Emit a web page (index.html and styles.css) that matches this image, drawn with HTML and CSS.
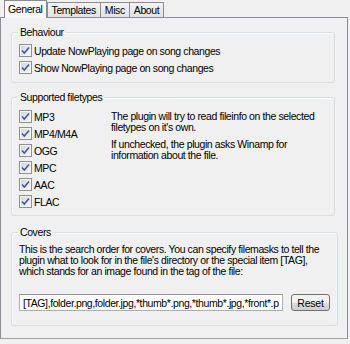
FILE: index.html
```html
<!DOCTYPE html>
<html lang="en">
<head>
<meta charset="UTF-8">
<title>NowPlaying settings</title>
<link rel="stylesheet" href="styles.css">
</head>
<body>

<div class="tabs">
    <span class="tab active">General</span>
    <span class="tab">Templates</span>
    <span class="tab">Misc</span>
    <span class="tab">About</span>
</div>

<div class="page">
    <fieldset class="group behaviour">
        <legend>Behaviour</legend>
        <label class="check"><span class="box"><svg width="11" height="11" viewBox="0 0 11 11"><path d="M2 5.5 L4.3 8 L9 2.5" /></svg></span>Update NowPlaying page on song changes</label>
        <label class="check"><span class="box"><svg width="11" height="11" viewBox="0 0 11 11"><path d="M2 5.5 L4.3 8 L9 2.5" /></svg></span>Show NowPlaying page on song changes</label>
    </fieldset>

    <fieldset class="group filetypes">
        <legend>Supported filetypes</legend>
        <div class="types">
            <div class="type-list">
                <label class="check"><span class="box"><svg width="11" height="11" viewBox="0 0 11 11"><path d="M2 5.5 L4.3 8 L9 2.5" /></svg></span>MP3</label>
                <label class="check"><span class="box"><svg width="11" height="11" viewBox="0 0 11 11"><path d="M2 5.5 L4.3 8 L9 2.5" /></svg></span>MP4/M4A</label>
                <label class="check"><span class="box"><svg width="11" height="11" viewBox="0 0 11 11"><path d="M2 5.5 L4.3 8 L9 2.5" /></svg></span>OGG</label>
                <label class="check"><span class="box"><svg width="11" height="11" viewBox="0 0 11 11"><path d="M2 5.5 L4.3 8 L9 2.5" /></svg></span>MPC</label>
                <label class="check"><span class="box"><svg width="11" height="11" viewBox="0 0 11 11"><path d="M2 5.5 L4.3 8 L9 2.5" /></svg></span>AAC</label>
                <label class="check"><span class="box"><svg width="11" height="11" viewBox="0 0 11 11"><path d="M2 5.5 L4.3 8 L9 2.5" /></svg></span>FLAC</label>
            </div>
            <div class="types-info">
                <p>The plugin will try to read fileinfo on the selected<br>filetypes on it's own.</p>
                <p>If unchecked, the plugin asks Winamp for<br>information about the file.</p>
            </div>
        </div>
    </fieldset>

    <fieldset class="group covers">
        <legend>Covers</legend>
        <p class="covers-text">This is the search order for covers. You can specify filemasks to tell the<br>plugin what to look for in the file's directory or the special item [TAG],<br>which stands for an image found in the tag of the file:</p>
        <div class="covers-row">
            <input type="text" class="masks" value="[TAG],folder.png,folder.jpg,*thumb*.png,*thumb*.jpg,*front*.png,*front*.jpg">
            <button type="button" class="btn">Reset</button>
        </div>
    </fieldset>
</div>

</body>
</html>
```

FILE: styles.css
```css
body {
    margin: 0;
    padding: 0;
    width: 350px;
    height: 344px;
    background-color: #f0f0f0;
    font-family: "Liberation Sans", Arial, sans-serif;
    font-size: 10.5px;
    letter-spacing: -0.4px;
    color: #000;
    overflow: hidden;
}
.tabs {
    display: flex;
    align-items: flex-end;
    height: 17px;
    padding-left: 4px;
    position: relative;
    z-index: 1;
}
.tab {
    height: 15px;
    line-height: 14px;
    padding: 0 4px;
    border: 1px solid #898c95;
    border-bottom: none;
    margin-left: -1px;
    background: linear-gradient(#f3f3f3, #e3e3e3);
    box-sizing: border-box;
}
.tab.active {
    height: 18px;
    margin-bottom: -1px;
    margin-left: 0;
    margin-right: 1px;
    padding: 0 3px;
    line-height: 16px;
    background: #f9f9f9;
}
.page {
    width: 348px;
    height: 322px;
    box-sizing: border-box;
    border: 1px solid #898c95;
    border-bottom-color: #a0a0a0;
    padding: 8px 12px 0 10px;
    background-color: #f0f0f0;
}
.group {
    margin: 0;
    border: 1px solid #d5dfe5;
    border-radius: 3px;
    box-shadow: inset 1px 1px 0 #fbfbfb;
    padding: 3px 7px 5px 7px;
}
.group legend {
    padding: 0 2px;
    margin-left: -1px;
    line-height: 13px;
    color: #000;
}
.check {
    display: flex;
    align-items: center;
    height: 17px;
    white-space: nowrap;
}
.box {
    display: flex;
    align-items: center;
    justify-content: center;
    width: 13px;
    height: 13px;
    box-sizing: border-box;
    border: 1px solid #8f8f8f;
    background: linear-gradient(135deg, #d2d4d8, #f7f7f7);
    box-shadow: inset 0 0 0 1px #f4f4f4;
    margin-right: 2px;
}
.box svg {
    display: block;
}
.box path {
    fill: none;
    stroke: #3d56a6;
    stroke-width: 1.5;
}
.behaviour {
    padding-bottom: 6px;
}
.filetypes {
    margin-top: 8px;
    padding-top: 4px;
    padding-bottom: 5px;
}
.types {
    display: flex;
}
.type-list {
    width: 92px;
}
.types-info {
    padding-top: 3px;
}
.types-info p {
    margin: 0 0 6px 0;
    line-height: 11px;
    white-space: nowrap;
}
.covers {
    margin-top: 10px;
    padding-top: 5px;
    padding-bottom: 14px;
}
.covers-text {
    margin: 0;
    line-height: 11px;
    white-space: nowrap;
}
.covers-row {
    display: flex;
    align-items: center;
    margin-top: 17px;
}
.masks {
    width: 264px;
    height: 17px;
    box-sizing: border-box;
    border: 1px solid #abadb3;
    border-top-color: #8f939b;
    padding: 0 3px;
    margin: 0;
    font-family: inherit;
    font-size: 10.5px;
    letter-spacing: -0.4px;
    background: #fff;
}
.btn {
    width: 39px;
    height: 17px;
    margin-left: 8px;
    padding: 0;
    box-sizing: border-box;
    border: 1px solid #707070;
    border-radius: 3px;
    background: linear-gradient(#f2f2f2 50%, #dddddd 50%, #cfcfcf);
    font-family: inherit;
    font-size: 10.5px;
    letter-spacing: -0.2px;
}
```
